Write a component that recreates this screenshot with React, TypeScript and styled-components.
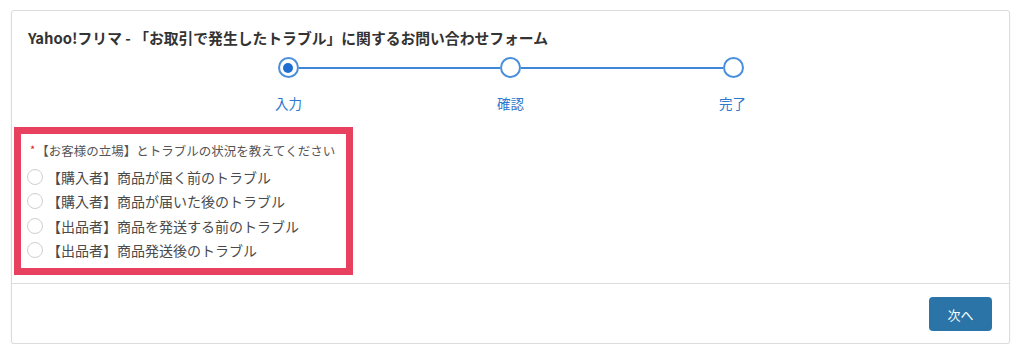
import { createGlobalStyle, styled } from 'styled-components';

const GlobalStyle = createGlobalStyle`
  html, body {
    margin: 0;
    padding: 0;
    background: #ffffff;
  }
  body {
    font-family: "Noto Sans CJK JP", "Noto Sans", sans-serif;
    color: #333333;
  }
`;

const steps = [
  { label: '入力', active: true },
  { label: '確認', active: false },
  { label: '完了', active: false },
];

const options = [
  '【購入者】商品が届く前のトラブル',
  '【購入者】商品が届いた後のトラブル',
  '【出品者】商品を発送する前のトラブル',
  '【出品者】商品発送後のトラブル',
];

export default function App() {
  return (
    <>
      <GlobalStyle />
      <S.Card>
        <S.Body>
          <S.Title>Yahoo!フリマ - 「お取引で発生したトラブル」に関するお問い合わせフォーム</S.Title>
          <S.Stepper>
            <S.Track>
              {steps.map((step, i) => (
                <S.TrackPart key={step.label}>
                  {i > 0 && <S.Line />}
                  <S.Dot $active={step.active} />
                </S.TrackPart>
              ))}
            </S.Track>
            <S.Labels>
              {steps.map(step => (
                <S.StepLabel key={step.label}>{step.label}</S.StepLabel>
              ))}
            </S.Labels>
          </S.Stepper>
          <S.Question>
            <S.QuestionLabel>
              <S.Required>*</S.Required>
              【お客様の立場】とトラブルの状況を教えてください
            </S.QuestionLabel>
            {options.map(opt => (
              <S.Option key={opt}>
                <S.Radio />
                <S.OptionText>{opt}</S.OptionText>
              </S.Option>
            ))}
          </S.Question>
        </S.Body>
        <S.Footer>
          <S.NextButton>次へ</S.NextButton>
        </S.Footer>
      </S.Card>
    </>
  );
}

const S = {
  Card: styled.div`
    margin: 10px 14px 0 11px;
    height: 334px;
    box-sizing: border-box;
    border: 1px solid #dcdcdc;
    border-radius: 3px;
    box-shadow: 0 1px 2px rgba(0, 0, 0, 0.08);
    background: #ffffff;
    display: flex;
    flex-direction: column;
  `,
  Body: styled.div`
    padding: 17px 0 8px 2px;
    border-bottom: 1px solid #dddddd;
  `,
  Title: styled.h1`
    margin: 0 0 0 14px;
    font-size: 14.8px;
    line-height: 20px;
    font-weight: 700;
    color: #333333;
    letter-spacing: 0;
  `,
  Stepper: styled.div`
    width: 666px;
    margin: 9px auto 0;
    position: relative;
    left: -1px;
  `,
  Track: styled.div`
    display: flex;
    align-items: center;
    padding: 0 100px;
  `,
  TrackPart: styled.div`
    display: flex;
    align-items: center;
    &:not(:first-child) {
      flex: 1;
    }
  `,
  Line: styled.div`
    flex: 1;
    height: 2px;
    background: #3d86d8;
  `,
  Dot: styled.div<{ $active: boolean }>`
    width: 21px;
    height: 21px;
    box-sizing: border-box;
    border-radius: 50%;
    border: 2px solid #4a8fdc;
    background: #ffffff;
    display: flex;
    align-items: center;
    justify-content: center;
    flex-shrink: 0;
    &::after {
      content: '';
      display: ${p => (p.$active ? 'block' : 'none')};
      width: 10px;
      height: 10px;
      border-radius: 50%;
      background: #1f6fd1;
    }
  `,
  Labels: styled.div`
    display: grid;
    grid-template-columns: repeat(3, 1fr);
    margin-top: 16px;
  `,
  StepLabel: styled.div`
    text-align: center;
    font-size: 13.5px;
    line-height: 18px;
    color: #2c79cf;
  `,
  Question: styled.div`
    width: 339px;
    box-sizing: border-box;
    margin: 15px 0 0 0;
    border: 7px solid #e8405f;
    padding: 8px 0 6px 6px;
    background: #ffffff;
  `,
  QuestionLabel: styled.div`
    font-size: 12.5px;
    line-height: 18px;
    color: #555555;
    margin: 0 0 5px 3px;
    white-space: nowrap;
  `,
  Required: styled.span`
    color: #e02020;
    font-size: 11px;
    margin-right: 1px;
    position: relative;
    top: -2px;
  `,
  Option: styled.label`
    display: flex;
    align-items: center;
    height: 24.3px;
    gap: 4px;
  `,
  Radio: styled.span`
    width: 16px;
    height: 16px;
    box-sizing: border-box;
    border-radius: 50%;
    border: 1px solid #cfcfcf;
    background: #ffffff;
    flex-shrink: 0;
  `,
  OptionText: styled.span`
    font-size: 14px;
    line-height: 20px;
    color: #4a4a4a;
    white-space: nowrap;
  `,
  Footer: styled.div`
    flex: 1;
    display: flex;
    justify-content: flex-end;
    align-items: flex-start;
    padding: 13px 17px 0 0;
  `,
  NextButton: styled.button`
    width: 63px;
    height: 34px;
    border: none;
    border-radius: 4px;
    background: #2a74a8;
    color: #ffffff;
    font-family: "Noto Sans CJK JP", "Noto Sans", sans-serif;
    font-size: 13px;
    cursor: pointer;
  `,
};
